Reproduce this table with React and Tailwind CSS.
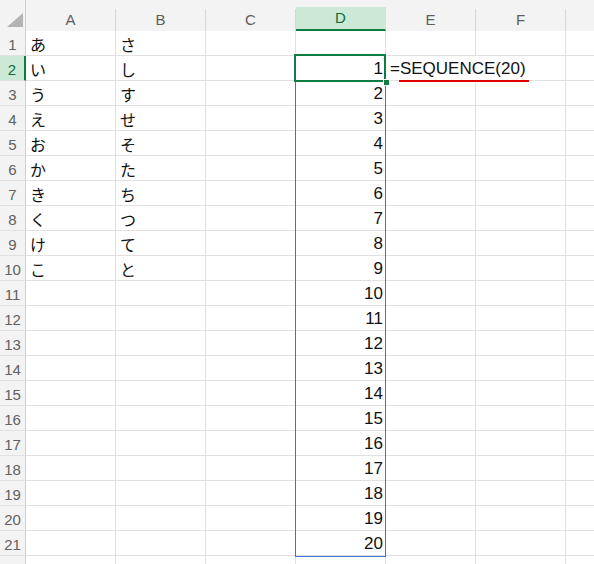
const columns = ['A', 'B', 'C', 'D', 'E', 'F', 'G']
const kanaA = ['あ', 'い', 'う', 'え', 'お', 'か', 'き', 'く', 'け', 'こ']
const kanaB = ['さ', 'し', 'す', 'せ', 'そ', 'た', 'ち', 'つ', 'て', 'と']

function Corner() {
    return (
        <div className="relative h-[31px] bg-[#f3f3f3] border-r border-[#cfcfcf]">
            <svg className="absolute left-[7px] top-[13px]" width="16" height="14" viewBox="0 0 16 14">
                <polygon points="16,0 16,14 0,14" fill="#b4b4b4" />
            </svg>
        </div>
    )
}

function ColHeader({ name }) {
    const active = name === 'D'
    // column G is only partly in view, its letter falls past the edge
    const label = name === 'G' ? '' : name
    return (
        <div className="flex flex-col h-[31px] bg-[#f3f3f3]">
            <div className="h-[9px]"></div>
            <div
                className={`flex-1 flex items-center justify-center text-[15px] border-r ${active ? 'bg-[#cbe9d6] text-[#0f6b38] border-[#cbe9d6] border-b-2 border-b-[#107c41]' : 'text-[#5e5e5e] border-[#d6d6d6]'}`}
            >
                {label}
            </div>
        </div>
    )
}

function RowHeader({ n }) {
    const active = n === 2
    return (
        <div
            className={`flex items-end justify-center h-[25px] pb-[3px] text-[15px] leading-none border-b border-[#e1e1e1] ${active ? 'bg-[#cbe9d6] text-[#0f6b38] border-r-2 border-r-[#107c41]' : 'bg-[#f3f3f3] text-[#616161] border-r border-r-[#cfcfcf]'}`}
        >
            {n <= 21 ? n : ''}
        </div>
    )
}

function Cell({ row, col }) {
    let content = null
    let align = 'justify-start pl-[4px]'
    let font = "font-['Noto_Sans_CJK_JP',sans-serif] text-[16px]"
    if (col === 'A' && row <= 10) content = kanaA[row - 1]
    if (col === 'B' && row <= 10) content = kanaB[row - 1]
    if (col === 'D' && row >= 2 && row <= 21) {
        content = row - 1
        align = 'justify-end pr-[2px]'
        font = "font-['Liberation_Sans',sans-serif] text-[17px]"
    }
    const isFormula = col === 'E' && row === 2
    return (
        <div
            className={`relative flex items-end h-[25px] leading-none text-[#111] border-b border-[#e1e1e1] ${isFormula ? '' : 'border-r'} ${align} ${font} ${content !== null ? 'pb-[3px]' : ''}`}
        >
            {content}
            {isFormula && (
                <span className="absolute left-[4px] bottom-[3px] whitespace-nowrap font-['Liberation_Sans',sans-serif] text-[17px] text-[#111]">
                    =SEQUENCE(20)
                </span>
            )}
        </div>
    )
}

export default function App() {
    const rows = Array.from({ length: 22 }, (_, i) => i + 1)
    return (
        <div className="relative w-[594px] h-[564px] overflow-hidden bg-white font-['Liberation_Sans',sans-serif]">
            <div className="grid grid-cols-[26px_repeat(7,90px)]">
                <Corner />
                {columns.map((c) => (
                    <ColHeader key={c} name={c} />
                ))}
                {rows.map((r) => (
                    <div key={r} className="contents">
                        <RowHeader n={r} />
                        {columns.map((c) => (
                            <Cell key={c} row={r} col={c} />
                        ))}
                    </div>
                ))}
            </div>

            {/* spill range */}
            <div className="absolute left-[295px] top-[55px] w-[91px] h-[502px] border border-[#3b72d6] pointer-events-none"></div>
            {/* active cell */}
            <div className="absolute left-[294px] top-[54px] w-[92px] h-[28px] border-2 border-[#107c41] pointer-events-none"></div>
            {/* fill handle */}
            <div className="absolute left-[383px] top-[79px] w-[7px] h-[7px] bg-[#107c41] border border-white"></div>
            {/* error underline */}
            <div className="absolute left-[399px] top-[80px] w-[130px] h-[2px] bg-[#e50000]"></div>
        </div>
    )
}
